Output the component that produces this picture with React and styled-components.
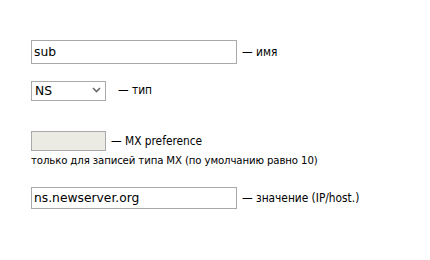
import React from 'react'
import styled, { createGlobalStyle } from 'styled-components'

const GlobalStyle = createGlobalStyle`
	body {
		margin: 0;
		background: #fff;
		font-family: 'DejaVu Sans', Verdana, sans-serif;
		color: #000;
	}
`

const Form = styled.div`
	padding: 40px 0 0 31px;
	display: flex;
	flex-direction: column;
	align-items: flex-start;
`
const Row = styled.div`
	display: flex;
	align-items: center;
	margin-top: ${({ top }) => top || 0}px;
`
const Label = styled.span`
	font-family: 'DejaVu Sans Condensed', 'DejaVu Sans', sans-serif;
	font-size: 11.8px;
	margin-left: ${({ gap }) => gap || 5}px;
	white-space: nowrap;
`
const Note = styled.div`
	font-family: 'DejaVu Sans Condensed', 'DejaVu Sans', sans-serif;
	font-size: 11.3px;
	letter-spacing: -0.12px;
	margin-top: 3px;
	white-space: nowrap;
`
const TextInput = styled.input`
	box-sizing: border-box;
	width: ${({ w }) => w}px;
	height: ${({ h }) => h}px;
	margin: 0;
	padding: 0 2px;
	border: 1px solid #a9a9a9;
	background: ${({ disabled }) => (disabled ? '#ebebe4' : '#fff')};
	font-family: 'DejaVu Sans', Verdana, sans-serif;
	font-size: 12.3px;
	color: #000;
	outline: none;
`
const SelectWrap = styled.div`
	position: relative;
	width: 75px;
	height: 20px;
`
const Select = styled.select`
	box-sizing: border-box;
	width: 100%;
	height: 100%;
	margin: 0;
	padding: 0 0 0 3px;
	border: 1px solid #a9a9a9;
	background: #fff;
	appearance: none;
	font-family: 'DejaVu Sans', Verdana, sans-serif;
	font-size: 12.3px;
	color: #000;
	outline: none;
`
const Arrow = styled.svg`
	position: absolute;
	right: 5px;
	top: 7px;
	pointer-events: none;
`

export default function App() {
	return (
		<>
			<GlobalStyle />
			<Form>
				<Row>
					<TextInput w={206} h={24} defaultValue="sub" />
					<Label>— имя</Label>
				</Row>
				<Row top={16}>
					<SelectWrap>
						<Select defaultValue="NS">
							<option>A</option>
							<option>CNAME</option>
							<option>MX</option>
							<option>NS</option>
							<option>TXT</option>
						</Select>
						<Arrow width="9" height="6" viewBox="0 0 9 6">
							<path d="M1 1l3.5 3.5L8 1" fill="none" stroke="#6b6b6b" strokeWidth="1.6" />
						</Arrow>
					</SelectWrap>
					<Label gap={12}>— тип</Label>
				</Row>
				<Row top={31}>
					<TextInput w={75} h={20} disabled />
					<Label>— MX preference</Label>
				</Row>
				<Note>только для записей типа MX (по умолчанию равно 10)</Note>
				<Row top={20}>
					<TextInput w={206} h={22} defaultValue="ns.newserver.org" />
					<Label>— значение (IP/host.)</Label>
				</Row>
			</Form>
		</>
	)
}
